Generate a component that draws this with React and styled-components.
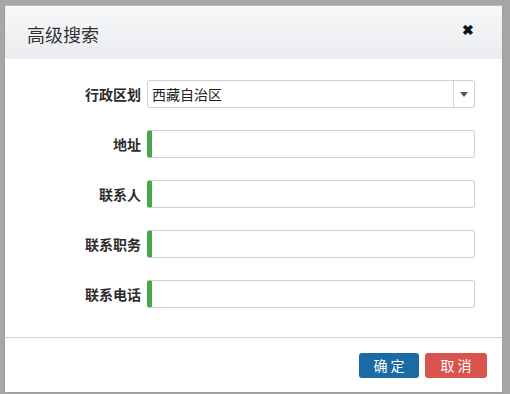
import React from "react"
import styled, { createGlobalStyle } from "styled-components"

const GlobalStyle = createGlobalStyle`
  html, body {
    margin: 0;
    padding: 0;
    background: #a7a7a7;
    font-family: "Noto Sans CJK SC", "Liberation Sans", sans-serif;
  }
`

const Page = styled.div`
  width: 510px;
  height: 394px;
  padding: 5px 0 0 4px;
  box-sizing: border-box;
`

const Modal = styled.div`
  width: 499px;
  height: 388px;
  box-sizing: border-box;
  background: #fff;
  border: 1px solid #9a9a9a;
  border-top-color: #b9b9b9;
  border-radius: 2px;
  display: flex;
  flex-direction: column;
  overflow: hidden;
`

const Header = styled.div`
  height: 53px;
  flex: none;
  display: flex;
  align-items: center;
  justify-content: space-between;
  padding: 0 28px 0 22px;
  background: linear-gradient(to bottom, #f6f7f8, #ebecef);
`

const Title = styled.h4`
  margin: 0;
  font-size: 18px;
  font-weight: 400;
  color: #333;
  padding-top: 2px;
`

const Close = styled.button`
  border: none;
  background: none;
  padding: 0;
  font-size: 14px;
  font-weight: 700;
  color: #111;
  line-height: 1;
  cursor: pointer;
  margin-top: -5px;
`

const Body = styled.div`
  flex: 1;
  padding: 21px 0 0;
  display: flex;
  flex-direction: column;
  gap: 22px;
  border-bottom: 1px solid #d4d4d4;
`

const Row = styled.div`
  display: grid;
  grid-template-columns: 136px 328px;
  column-gap: 6px;
  align-items: center;
  height: 28px;
`

const Label = styled.label`
  text-align: right;
  font-size: 14px;
  font-weight: 700;
  color: #2b2b2b;
`

const Field = styled.div`
  height: 28px;
  box-sizing: border-box;
  border: 1px solid #d0d0d0;
  border-left: ${({ $required }) => ($required ? "5px solid #45a84a" : "1px solid #d0d0d0")};
  border-radius: 3px;
  display: flex;
  align-items: center;
  background: #fff;
`

const Input = styled.input`
  border: none;
  outline: none;
  flex: 1;
  height: 100%;
  padding: 0 6px;
  background: transparent;
  font-family: inherit;
  font-size: 14px;
`

const SelectText = styled.span`
  flex: 1;
  padding-left: 4px;
  font-size: 14px;
  color: #222;
`

const Arrow = styled.span`
  width: 20px;
  height: 100%;
  border-left: 1px solid #d6d6d6;
  display: flex;
  align-items: center;
  justify-content: center;
  &::after {
    content: "";
    border-left: 4px solid transparent;
    border-right: 4px solid transparent;
    border-top: 5px solid #555;
  }
`

const Footer = styled.div`
  height: 54px;
  flex: none;
  display: flex;
  justify-content: flex-end;
  align-items: center;
  gap: 6px;
  padding: 0 15px 0 0;
`

const Button = styled.button`
  height: 25px;
  width: ${({ $w }) => $w}px;
  border: none;
  border-radius: 3px;
  color: #fff;
  font-family: inherit;
  font-size: 14px;
  letter-spacing: 3px;
  padding: 0 0 0 3px;
  background: ${({ $kind }) => ($kind === "danger" ? "#d9534f" : "#1a6aa3")};
  cursor: pointer;
`

const fields = ["地址", "联系人", "联系职务", "联系电话"]

export default function App() {
  return (
    <Page>
      <GlobalStyle />
      <Modal>
        <Header>
          <Title>高级搜索</Title>
          <Close aria-label="关闭">✖</Close>
        </Header>
        <Body>
          <Row>
            <Label>行政区划</Label>
            <Field>
              <SelectText>西藏自治区</SelectText>
              <Arrow />
            </Field>
          </Row>
          {fields.map((f) => (
            <Row key={f}>
              <Label>{f}</Label>
              <Field $required>
                <Input />
              </Field>
            </Row>
          ))}
        </Body>
        <Footer>
          <Button $w={60}>确定</Button>
          <Button $w={62} $kind="danger">取消</Button>
        </Footer>
      </Modal>
    </Page>
  )
}
